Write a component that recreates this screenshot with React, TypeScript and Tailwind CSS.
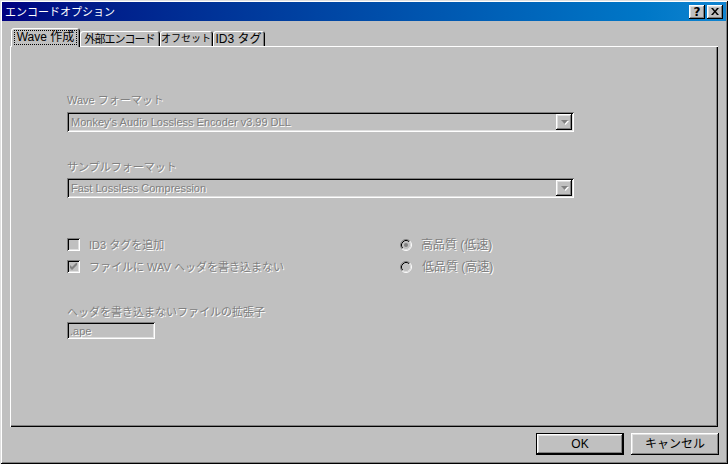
import React from "react";

const raised =
  "shadow-[inset_-1px_-1px_0_#000,inset_1px_1px_0_#fff,inset_-2px_-2px_0_#808080,inset_2px_2px_0_#dfdfdf]";
const sunken =
  "shadow-[inset_1px_1px_0_#808080,inset_-1px_-1px_0_#fff,inset_2px_2px_0_#000,inset_-2px_-2px_0_#dfdfdf]";
const dim = "text-[#808080] [text-shadow:1px_1px_0_#fff]";
const tabEdge = "rounded-t-[3px] shadow-[inset_1px_1px_0_#fff,inset_-1px_0_0_#000,inset_-2px_0_0_#808080]";

function TitleButton({ children }: { children: React.ReactNode }) {
  return (
    <div className={`w-[16px] h-[14px] bg-[#c0c0c0] ${raised} flex items-center justify-center`}>
      {children}
    </div>
  );
}

function Combo({ value }: { value: string }) {
  return (
    <div className={`relative w-[507px] h-[20px] bg-[#c0c0c0] ${sunken} flex items-center`}>
      <span className={`pl-[4px] ${dim}`}>{value}</span>
      <div className={`absolute right-[2px] top-[2px] w-[16px] h-[16px] bg-[#c0c0c0] ${raised} flex items-center justify-center`}>
        <svg width="9" height="6" viewBox="0 0 9 6">
          <path d="M2 2h7l-3.5 4z" fill="#fff" />
          <path d="M1 1h7l-3.5 4z" fill="#808080" />
        </svg>
      </div>
    </div>
  );
}

function Check({ checked, label }: { checked?: boolean; label: string }) {
  return (
    <div className="flex items-center h-[13px]">
      <div className={`w-[13px] h-[13px] bg-[#c0c0c0] ${sunken} flex items-center justify-center`}>
        {checked && (
          <svg width="7" height="7" viewBox="0 0 7 7">
            <path d="M0 2v3l2 2l5-5V-1l-5 5z" fill="#808080" />
          </svg>
        )}
      </div>
      <span className={`ml-[9px] whitespace-nowrap ${dim}`}>{label}</span>
    </div>
  );
}

function Radio({ checked, label, gap }: { checked?: boolean; label: string; gap: string }) {
  return (
    <div className="flex items-center h-[13px]">
      <svg width="12" height="12" viewBox="0 0 12 12">
        <circle cx="6" cy="6" r="5" fill="#c0c0c0" />
        <path d="M2.11 9.89A5.5 5.5 0 0 1 9.89 2.11" stroke="#808080" fill="none" />
        <path d="M9.89 2.11A5.5 5.5 0 0 1 2.11 9.89" stroke="#fff" fill="none" />
        <path d="M2.82 9.18A4.5 4.5 0 0 1 9.18 2.82" stroke="#000" fill="none" />
        <path d="M9.18 2.82A4.5 4.5 0 0 1 2.82 9.18" stroke="#dfdfdf" fill="none" />
        {checked && <circle cx="6" cy="6" r="2" fill="#808080" />}
      </svg>
      <span className={`${gap} text-[12px] whitespace-nowrap ${dim}`}>{label}</span>
    </div>
  );
}

export default function App() {
  return (
    <div
      className="w-[728px] h-[464px] bg-[#c0c0c0] p-[2px] flex flex-col text-[11px] leading-[14px] text-black font-['Liberation_Sans','Noto_Sans_CJK_JP',sans-serif] shadow-[inset_1px_1px_0_#dfdfdf,inset_-1px_-1px_0_#000,inset_2px_2px_0_#fff,inset_-2px_-2px_0_#808080]"
    >
      {/* title bar */}
      <div className="h-[19px] bg-gradient-to-r from-[#000080] to-[#1084d0] flex items-center justify-between pl-[3px] pr-[3px]">
        <span className="text-white text-[11px]">エンコードオプション</span>
        <div className="flex gap-[2px]">
          <TitleButton>
            <span className="font-bold text-[12px] leading-[12px] font-['DejaVu_Sans',sans-serif]">?</span>
          </TitleButton>
          <TitleButton>
            <svg width="8" height="7" viewBox="0 0 8 7">
              <path d="M0 0h2l2 2.5L6 0h2L5 3.5L8 7H6L4 4.5L2 7H0l3-3.5z" fill="#000" />
            </svg>
          </TitleButton>
        </div>
      </div>

      {/* tabs */}
      <div className="relative z-10 mt-[7px] ml-[9px] h-[18px] flex items-end whitespace-nowrap text-[11px]">
        <div className={`w-[69px] h-[19px] -mb-[1px] bg-[#c0c0c0] ${tabEdge} flex items-start justify-center pt-[2px]`}>
          <span className="px-[2px] border border-dotted border-black leading-[13px] text-[12px]">Wave 作成</span>
        </div>
        <div className={`w-[80px] h-[15px] ${tabEdge} flex items-center justify-center pr-[1px] tracking-[-1px]`}>外部エンコード</div>
        <div className={`w-[53px] h-[15px] ${tabEdge} flex items-center justify-center pr-[1px] text-[10px]`}>オフセット</div>
        <div className={`w-[52px] h-[15px] ${tabEdge} flex items-center justify-center text-[12px] pr-[1px]`}>ID3 タグ</div>
      </div>

      {/* tab panel */}
      <div className="ml-[8px] w-[708px] h-[381px] shadow-[inset_1px_1px_0_#fff,inset_-1px_-1px_0_#000,inset_-2px_-2px_0_#808080] pl-[57px] pt-[47px]">
        <div className={`h-[14px] ${dim}`}>Wave フォーマット</div>
        <div className="mt-[5px]">
          <Combo value="Monkey's Audio Lossless Encoder v3.99 DLL" />
        </div>
        <div className={`mt-[28px] h-[14px] ${dim}`}>サンプルフォーマット</div>
        <div className="mt-[4px]">
          <Combo value="Fast Lossless Compression" />
        </div>

        <div className="mt-[40px] grid grid-cols-[333px_1fr] gap-y-[9px]">
          <Check label="ID3 タグを追加" />
          <Radio checked label="高品質 (低速)" gap="ml-[9px]" />
          <Check checked label="ファイルに WAV ヘッダを書き込まない" />
          <Radio label="低品質 (高速)" gap="ml-[10px]" />
        </div>

        <div className={`mt-[32px] h-[14px] ${dim}`}>ヘッダを書き込まないファイルの拡張子</div>
        <div className={`mt-[3px] w-[88px] h-[17px] ${sunken} flex items-center pl-[3px] ${dim}`}>.ape</div>
      </div>

      {/* footer */}
      <div className="mt-[6px] flex justify-end gap-[7px] pr-[7px] text-[12px]">
        <div className="w-[88px] h-[22px] border border-black">
          <div className={`w-full h-full bg-[#c0c0c0] ${raised} flex items-center justify-center`}>OK</div>
        </div>
        <div className={`w-[88px] h-[22px] bg-[#c0c0c0] ${raised} flex items-center justify-center`}>キャンセル</div>
      </div>
    </div>
  );
}
